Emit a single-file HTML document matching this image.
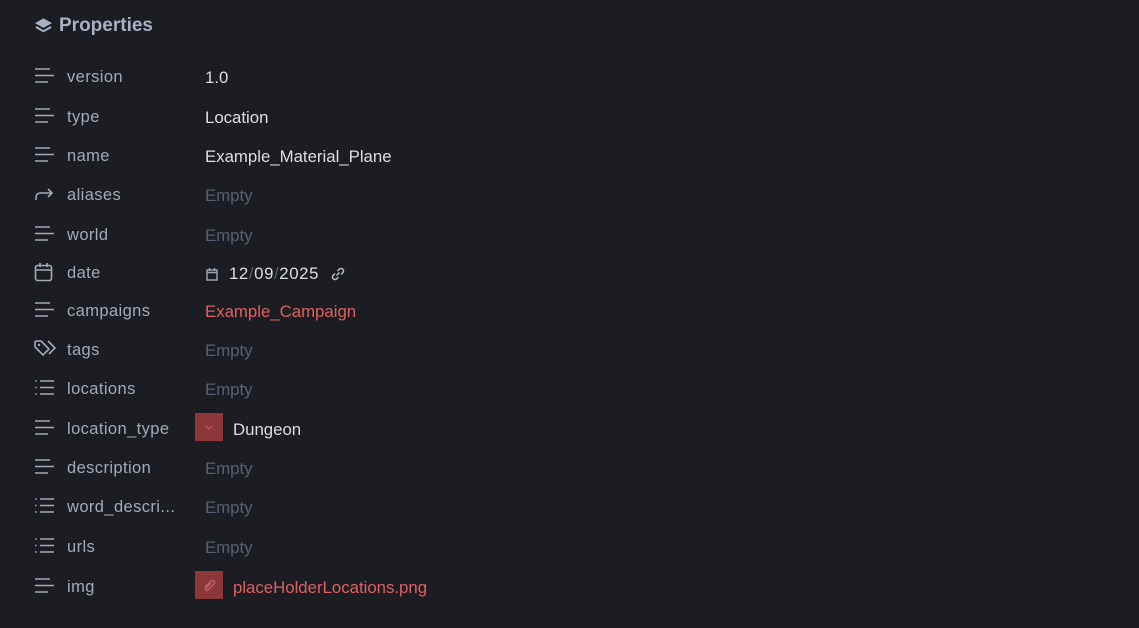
<!DOCTYPE html>
<html><head><meta charset="utf-8"><style>
body{margin:0;width:1139px;height:628px;background:#1b1d23;font-family:"Liberation Sans",sans-serif;overflow:hidden;position:relative}
.t{position:absolute;left:34px;top:15px;font-weight:bold;font-size:19px;color:#a9b0c2;display:flex;align-items:center;gap:6px}
.r{position:absolute;left:34px;height:30px;width:900px}
.r svg.i{position:absolute;left:0;top:4px}
.l{position:absolute;left:33px;top:7px;font-size:16.5px;letter-spacing:0.4px;color:#a3a9b8}
.v{position:absolute;left:171px;top:7px;font-size:16.8px;color:#dcdee4}
.e{color:#586072}.red{color:#e06060}
.b{position:absolute;left:161px;top:0;width:28px;height:28px;background:#8c3838}
</style></head><body>
<div class="t"><svg width="19" height="18" viewBox="0 0 20 18"><path d="M10 1 L19 6 L10 11 L1 6Z" fill="#a9b0c2"/><path d="M2 10 L10 14.5 L18 10" stroke="#a9b0c2" stroke-width="2.2" fill="none"/></svg>Properties</div>
<div class="r" style="top:61px"><svg class="i" width="20" height="20"><path d="M1 4h15M1 10.5h19M1 17h13" stroke="#a3a9b8" stroke-width="1.6"/></svg><span class="l">version</span><span class="v">1.0</span></div>
<div class="r" style="top:101px"><svg class="i" width="20" height="20"><path d="M1 4h15M1 10.5h19M1 17h13" stroke="#a3a9b8" stroke-width="1.6"/></svg><span class="l">type</span><span class="v">Location</span></div>
<div class="r" style="top:140px"><svg class="i" width="20" height="20"><path d="M1 4h15M1 10.5h19M1 17h13" stroke="#a3a9b8" stroke-width="1.6"/></svg><span class="l">name</span><span class="v">Example_Material_Plane</span></div>
<div class="r" style="top:179px"><svg class="i" width="20" height="20"><path d="M2 17v-3a4 4 0 0 1 4-4h12M14 6l4 4-4 4" stroke="#a3a9b8" stroke-width="1.6" fill="none"/></svg><span class="l">aliases</span><span class="v e">Empty</span></div>
<div class="r" style="top:219px"><svg class="i" width="20" height="20"><path d="M1 4h15M1 10.5h19M1 17h13" stroke="#a3a9b8" stroke-width="1.6"/></svg><span class="l">world</span><span class="v e">Empty</span></div>
<div class="r" style="top:257px"><svg class="i" style="top:4px" width="20" height="22"><rect x="1.5" y="4.5" width="16" height="15" rx="2" stroke="#a3a9b8" stroke-width="1.6" fill="none"/><path d="M1.5 9h16M6 2v4M13 2v4" stroke="#a3a9b8" stroke-width="1.6"/></svg><span class="l">date</span>
<span class="v" style="display:flex;align-items:center;gap:0;letter-spacing:0.6px"><svg width="14" height="14" style="margin-right:10px"><rect x="2" y="3" width="10" height="10" stroke="#9aa0ad" stroke-width="1.5" fill="none"/><path d="M2 5.5h10M4.5 1v3M9.5 1v3" stroke="#9aa0ad" stroke-width="1.5"/></svg>12<span class="e">/</span>09<span class="e">/</span>2025<svg width="18" height="18" style="margin-left:10px" viewBox="0 0 18 18"><path d="M7.5 10.5l3-3M6 8.5l-2 2a2.5 2.5 0 0 0 3.5 3.5l2-2M12 9.5l2-2A2.5 2.5 0 0 0 10.5 4l-2 2" stroke="#b8bdc8" stroke-width="1.5" fill="none"/></svg></span></div>
<div class="r" style="top:295px"><svg class="i" width="20" height="20"><path d="M1 4h15M1 10.5h19M1 17h13" stroke="#a3a9b8" stroke-width="1.6"/></svg><span class="l">campaigns</span><span class="v red">Example_Campaign</span></div>
<div class="r" style="top:334px"><svg class="i" width="22" height="20"><path d="M1 4v5l8 8 6-6-8-8H2z M14 3l7 7-6 6" stroke="#a3a9b8" stroke-width="1.6" fill="none"/><circle cx="5" cy="7" r="1.2" fill="#a3a9b8"/></svg><span class="l">tags</span><span class="v e">Empty</span></div>
<div class="r" style="top:373px"><svg class="i" width="20" height="20"><path d="M6 4h14M6 10.5h14M6 17h14M1 4h1.5M1 10.5h1.5M1 17h1.5" stroke="#a3a9b8" stroke-width="1.6"/></svg><span class="l">locations</span><span class="v e">Empty</span></div>
<div class="r" style="top:413px"><svg class="i" width="20" height="20"><path d="M1 4h15M1 10.5h19M1 17h13" stroke="#a3a9b8" stroke-width="1.6"/></svg><span class="l">location_type</span><span class="b"><svg width="28" height="28"><path d="M11 13l3 3 3-3" stroke="#c06060" stroke-width="1.2" fill="none"/></svg></span><span class="v" style="left:199px">Dungeon</span></div>
<div class="r" style="top:452px"><svg class="i" width="20" height="20"><path d="M1 4h15M1 10.5h19M1 17h13" stroke="#a3a9b8" stroke-width="1.6"/></svg><span class="l">description</span><span class="v e">Empty</span></div>
<div class="r" style="top:491px"><svg class="i" width="20" height="20"><path d="M6 4h14M6 10.5h14M6 17h14M1 4h1.5M1 10.5h1.5M1 17h1.5" stroke="#a3a9b8" stroke-width="1.6"/></svg><span class="l">word_descri...</span><span class="v e">Empty</span></div>
<div class="r" style="top:531px"><svg class="i" width="20" height="20"><path d="M6 4h14M6 10.5h14M6 17h14M1 4h1.5M1 10.5h1.5M1 17h1.5" stroke="#a3a9b8" stroke-width="1.6"/></svg><span class="l">urls</span><span class="v e">Empty</span></div>
<div class="r" style="top:571px"><svg class="i" width="20" height="20"><path d="M1 4h15M1 10.5h19M1 17h13" stroke="#a3a9b8" stroke-width="1.6"/></svg><span class="l">img</span><span class="b"><svg width="28" height="28"><path d="M10 16l6-6a2 2 0 0 1 3 3l-6 6a1 1 0 0 1-2-2l5-5" stroke="#c06060" stroke-width="1.5" fill="none"/></svg></span><span class="v red" style="left:199px">placeHolderLocations.png</span></div>
</body></html>
